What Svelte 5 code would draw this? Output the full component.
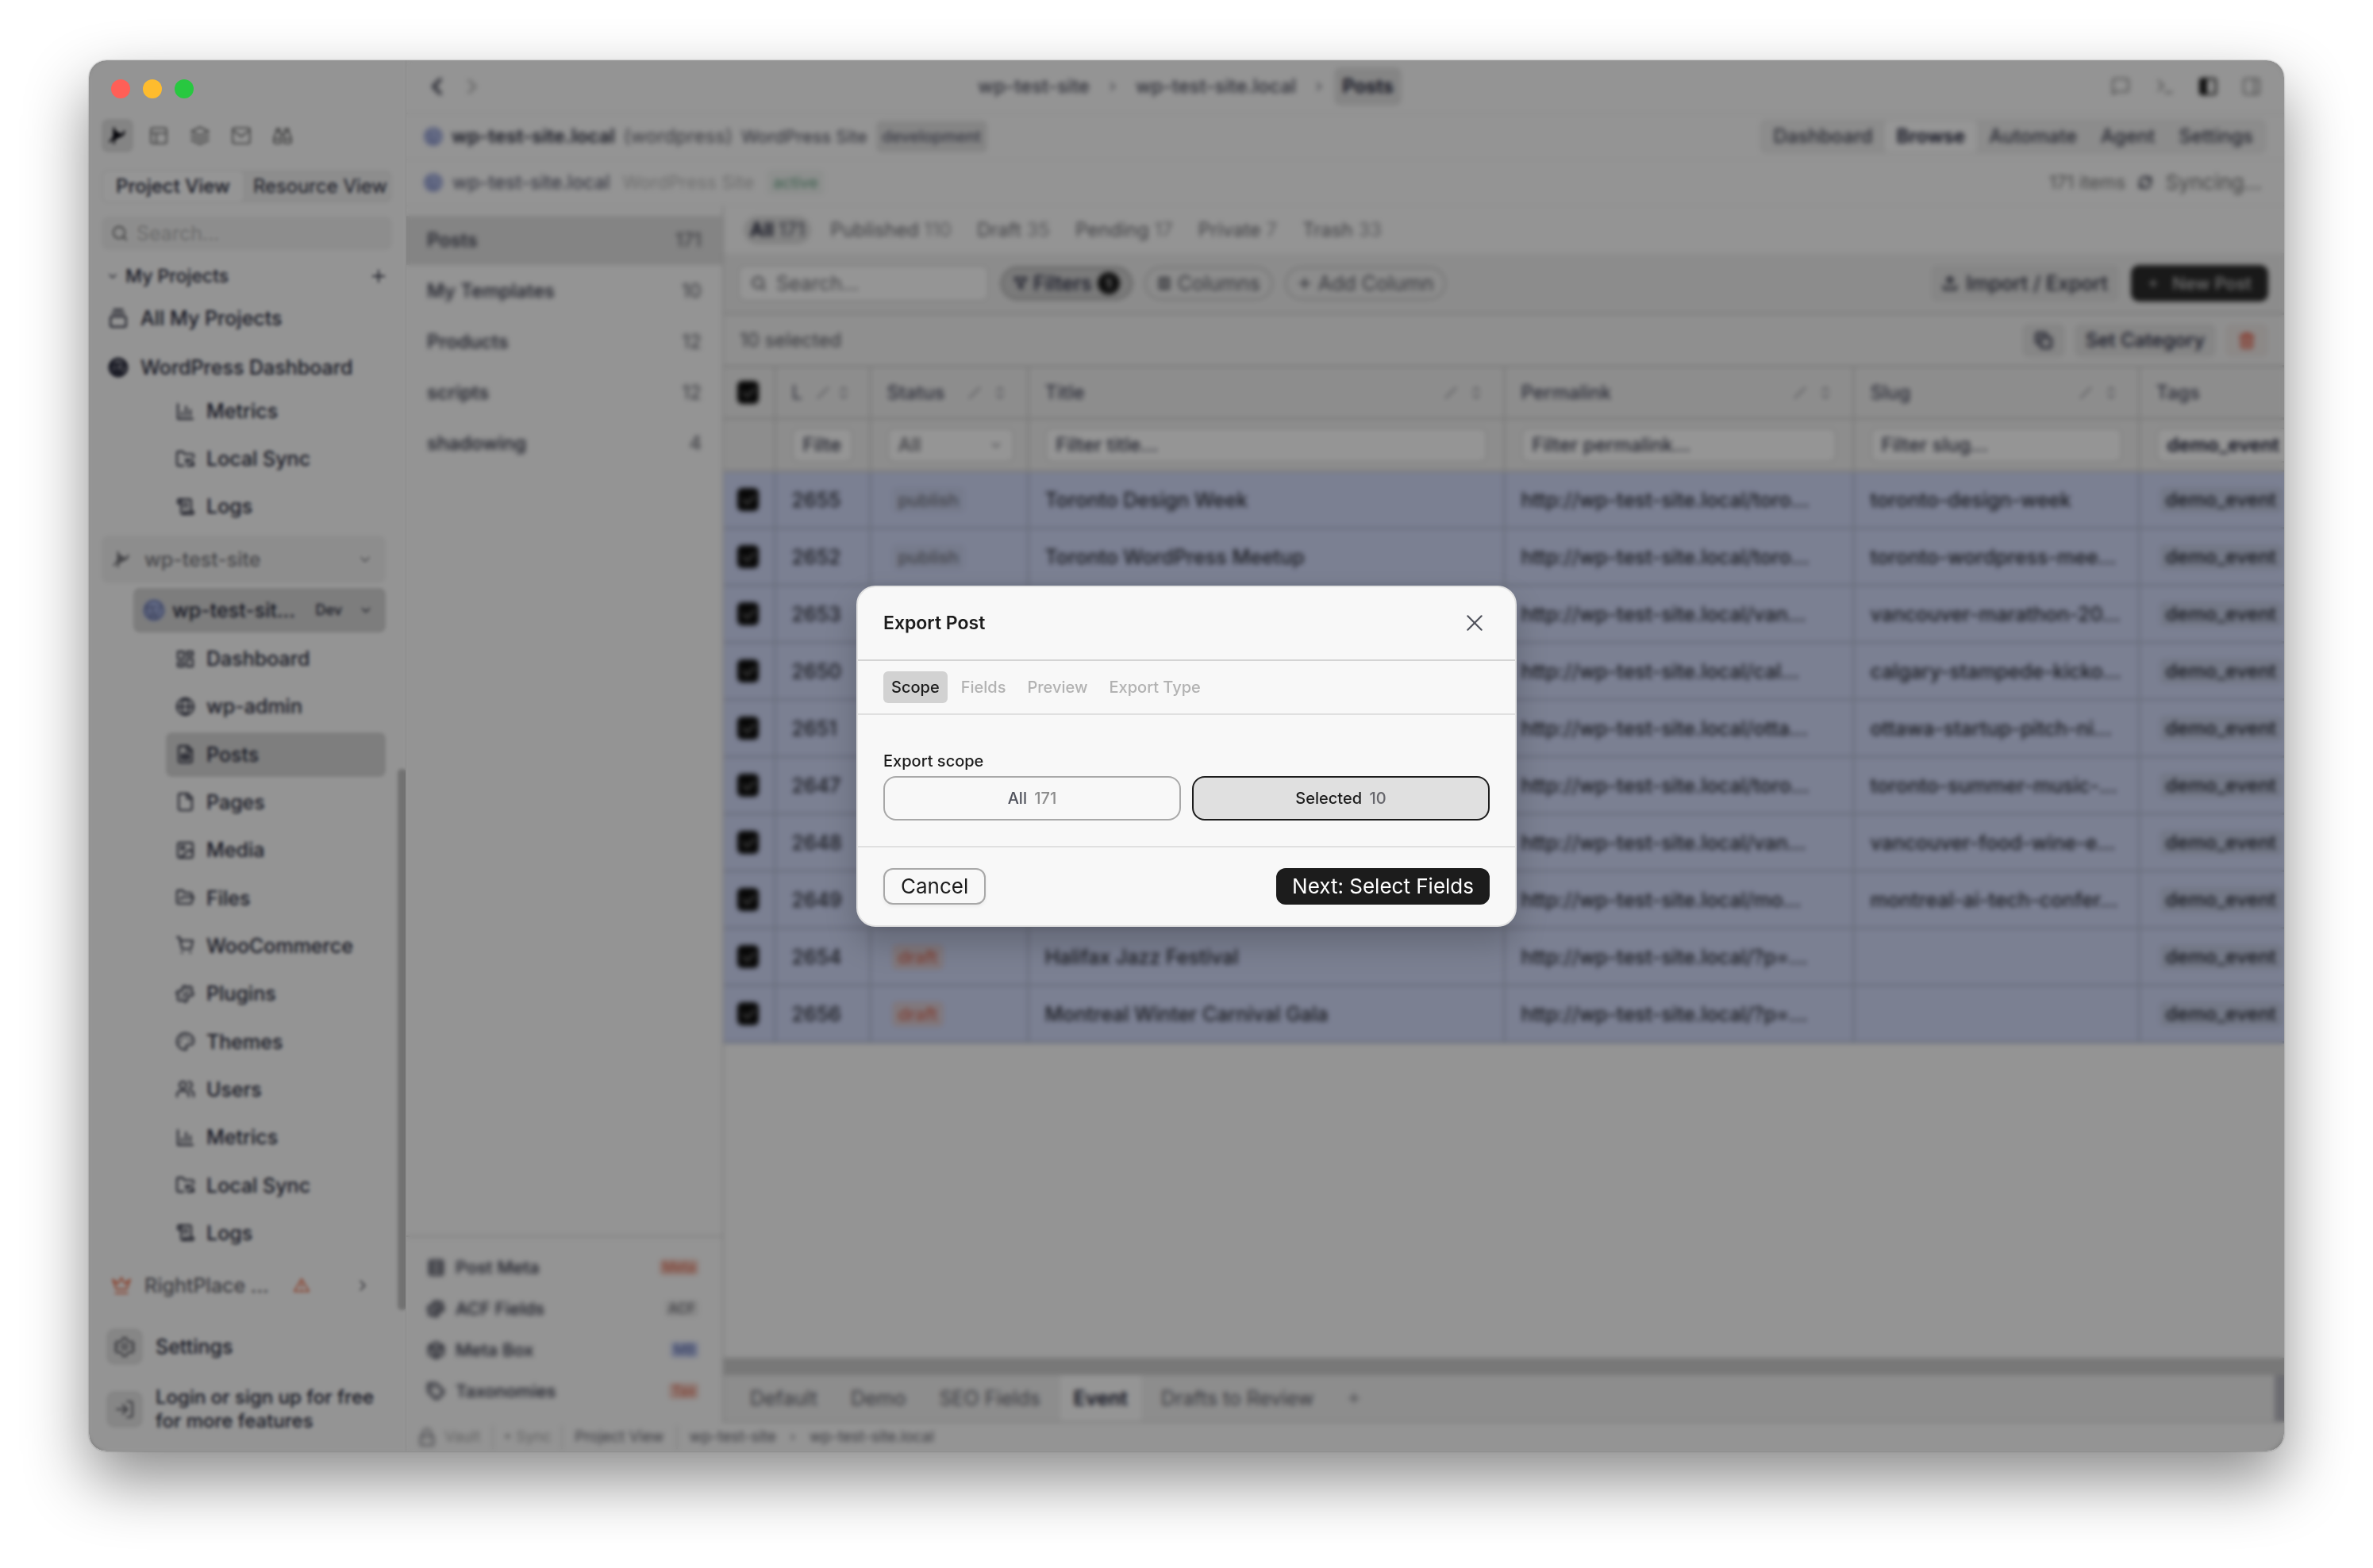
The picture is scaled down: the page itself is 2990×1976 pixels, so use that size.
<script lang="ts">
  const icons: Record<string, string[]> = {
    branch: ['M8 3v18', 'M8 17c0-4 12-3 12-10', 'M8 13L3 19', 'M8 6l8 5-8 6z'],
    layout: ['M5 3h14a2 2 0 0 1 2 2v14a2 2 0 0 1-2 2H5a2 2 0 0 1-2-2V5a2 2 0 0 1 2-2z', 'M3 9h18', 'M9 21V9'],
    layers: ['M12 2 2 7l10 5 10-5z', 'm2 12 10 5 10-5', 'm2 17 10 5 10-5'],
    mail: ['M4 3h16a2 2 0 0 1 2 2v14a2 2 0 0 1-2 2H4a2 2 0 0 1-2-2V5a2 2 0 0 1 2-2z', 'm21 6-9 7-9-7'],
    binoculars: ['M10 10h4', 'M19 7V4h-4v3', 'M5 7V4h4v3', 'M15 21h5a2 2 0 0 0 2-2v-4l-3-8h-4l-1 4v9a1 1 0 0 0 1 1z', 'M9 21H4a2 2 0 0 1-2-2v-4l3-8h4l1 4v9a1 1 0 0 1-1 1z', 'M2 16h8', 'M14 16h8'],
    search: ['M11 3a8 8 0 1 0 0 16 8 8 0 0 0 0-16z', 'm21 21-4-4'],
    down: ['m6 9 6 6 6-6'],
    right: ['m9 18 6-6-6-6'],
    left: ['m15 19-7-7 7-7'],
    plus: ['M12 4v16', 'M4 12h16'],
    stack: ['M5 10h14a2 2 0 0 1 2 2v8a2 2 0 0 1-2 2H5a2 2 0 0 1-2-2v-8a2 2 0 0 1 2-2z', 'M5 6h14', 'M7 2h10'],
    wordpress: ['M12 2a10 10 0 1 0 0 20 10 10 0 0 0 0-20z', 'm4 8 5 13 3-9', 'M9 8l5 13 5-14', 'M3 8h6', 'M10 8h5'],
    chart: ['M3 3v18h18', 'M8 17v-4', 'M13 17V6', 'M18 17v-7'],
    sync: ['M10 20H4a2 2 0 0 1-2-2V5a2 2 0 0 1 2-2h5l2 3h9a2 2 0 0 1 2 2v2', 'M13 12v3h3', 'M22 20v-3h-3', 'M21 14a5 5 0 0 0-8 1', 'M14 19a5 5 0 0 0 8-2'],
    logs: ['M19 17V5a2 2 0 0 0-2-2H4', 'M8 21h12a2 2 0 0 0 2-2v-1H11v1a2 2 0 1 1-4 0V5a2 2 0 1 0-4 0v3h4', 'M15 8h-5', 'M15 12h-5'],
    grid: ['M3 3h7v9H3z', 'M14 3h7v5h-7z', 'M14 12h7v9h-7z', 'M3 16h7v5H3z'],
    globe: ['M12 2a10 10 0 1 0 0 20 10 10 0 0 0 0-20z', 'M12 2a14 14 0 0 0 0 20 14 14 0 0 0 0-20', 'M2 12h20'],
    post: ['M15 2H6a2 2 0 0 0-2 2v16a2 2 0 0 0 2 2h12a2 2 0 0 0 2-2V7z', 'M14 2v6h6', 'M8 12h8v6H8z', 'M8 15h8'],
    page: ['M15 2H6a2 2 0 0 0-2 2v16a2 2 0 0 0 2 2h12a2 2 0 0 0 2-2V7z', 'M14 2v6h6'],
    image: ['M5 3h14a2 2 0 0 1 2 2v14a2 2 0 0 1-2 2H5a2 2 0 0 1-2-2V5a2 2 0 0 1 2-2z', 'M9 7a2 2 0 1 0 0 4 2 2 0 0 0 0-4z', 'm21 15-4-4L6 21'],
    folder: ['m6 14 2-3h14l-3 8H4a2 2 0 0 1-2-2V5a2 2 0 0 1 2-2h5l2 3h7a2 2 0 0 1 2 2v3'],
    cart: ['M2 2h3l3 14h11l2-10H6', 'M8 20v1', 'M18 20v1'],
    plug: ['M15 4a3 3 0 0 1 5 3l-1 2 3 3-3 3-2-1a3 3 0 0 0-3 3l1 2-3 3-3-3-2 1a3 3 0 0 1-4-4l1-2-3-3 3-3 2 1a3 3 0 0 0 3-3L8 5l3-3 3 3z', 'M9 15l6-6'],
    palette: ['M12 2a10 10 0 1 0 0 20c2 0 2-2 1-3s0-3 2-3h3c3 0 4-2 4-5 0-5-5-9-10-9z', 'M13 6v1', 'M17 10v1', 'M8 7v1', 'M6 12v1'],
    users: ['M2 21v-2a5 5 0 0 1 5-5h4a5 5 0 0 1 5 5v2', 'M9 3a4 4 0 1 0 0 8 4 4 0 0 0 0-8z', 'M22 21v-2a4 4 0 0 0-4-5', 'M16 3a4 4 0 0 1 0 8'],
    crown: ['m2 5 4 11h12l4-11-6 5-4-7-4 7z', 'M5 21h14'],
    warn: ['M12 3 2 20h20z', 'M12 9v5', 'M12 17v1'],
    gear: ['M12 9a3 3 0 1 0 0 6 3 3 0 0 0 0-6z', 'M10 2h4l1 3 3 2 3-1 2 4-3 2 3 3-2 4-3-1-3 2-1 3h-4l-1-3-3-2-3 1-2-4 3-3-3-2 2-4 3 1 3-2z'],
    login: ['M15 3h4a2 2 0 0 1 2 2v14a2 2 0 0 1-2 2h-4', 'm10 17 5-5-5-5', 'M15 12H3'],
    chat: ['M3 21V5a2 2 0 0 1 2-2h14a2 2 0 0 1 2 2v11a2 2 0 0 1-2 2H6z'],
    terminal: ['m5 17 6-6-6-6', 'M13 19h8'],
    panelLeft: ['M5 3h14a2 2 0 0 1 2 2v14a2 2 0 0 1-2 2H5a2 2 0 0 1-2-2V5a2 2 0 0 1 2-2z', 'M10 3v18', 'M5 4v16', 'M7 4v16', 'M9 4v16'],
    panelRight: ['M5 3h14a2 2 0 0 1 2 2v14a2 2 0 0 1-2 2H5a2 2 0 0 1-2-2V5a2 2 0 0 1 2-2z', 'M15 3v18'],
    refresh: ['M3 12a9 9 0 0 1 15-7l3 3', 'M21 3v5h-5', 'M21 12a9 9 0 0 1-15 7l-3-3', 'M3 21v-5h5'],
    filter: ['M2 3h20l-8 10v8l-4-3v-5z'],
    columns: ['M4 3h16v18H4z', 'M9 3v18', 'M15 3v18'],
    upload: ['M3 16v5h18v-5', 'M12 15V3', 'm7 8 5-5 5 5'],
    copy: ['M10 8h10a2 2 0 0 1 2 2v10a2 2 0 0 1-2 2H10a2 2 0 0 1-2-2V10a2 2 0 0 1 2-2z', 'M4 16a2 2 0 0 1-2-2V4a2 2 0 0 1 2-2h10a2 2 0 0 1 2 2'],
    trash: ['M3 6h18', 'M19 6v14a2 2 0 0 1-2 2H7a2 2 0 0 1-2-2V6', 'M8 6V3h8v3', 'M10 11v6', 'M14 11v6'],
    pencil: ['M4 20 20 4'],
    sort: ['m7 15 5 5 5-5', 'm7 9 5-5 5 5'],
    meta: ['M4 3h16v18H4z', 'M4 9h16', 'M4 15h16'],
    box: ['m12 2 9 5v10l-9 5-9-5V7z', 'm3 7 9 5 9-5', 'M12 12v10'],
    tag: ['M12 2H2v10l9 9a2 2 0 0 0 3 0l7-7a2 2 0 0 0 0-3z', 'M7 7v1'],
    lock: ['M4 11h16v11H4z', 'M7 11V7a5 5 0 0 1 10 0v4'],
    close: ['M4 4l16 16', 'M20 4 4 20'],
  }

  const railIcons = ['layout', 'layers', 'mail', 'binoculars']

  const dashboardLinks = [
    { icon: 'chart', label: 'Metrics' },
    { icon: 'sync', label: 'Local Sync' },
    { icon: 'logs', label: 'Logs' },
  ]

  const siteLinks = [
    { icon: 'grid', label: 'Dashboard' },
    { icon: 'globe', label: 'wp-admin' },
    { icon: 'post', label: 'Posts' },
    { icon: 'page', label: 'Pages' },
    { icon: 'image', label: 'Media' },
    { icon: 'folder', label: 'Files' },
    { icon: 'cart', label: 'WooCommerce' },
    { icon: 'plug', label: 'Plugins' },
    { icon: 'palette', label: 'Themes' },
    { icon: 'users', label: 'Users' },
    ...dashboardLinks,
  ]

  const postTypes = [
    { label: 'Posts', count: 171 },
    { label: 'My Templates', count: 10 },
    { label: 'Products', count: 12 },
    { label: 'scripts', count: 12 },
    { label: 'shadowing', count: 4 },
  ]

  const fieldGroups = [
    { icon: 'meta', label: 'Post Meta', badge: 'Meta', tone: 'red' },
    { icon: 'plug', label: 'ACF Fields', badge: 'ACF', tone: 'grey' },
    { icon: 'box', label: 'Meta Box', badge: 'MB', tone: 'blue' },
    { icon: 'tag', label: 'Taxonomies', badge: 'Tax', tone: 'red' },
  ]

  const sections = ['Dashboard', 'Browse', 'Automate', 'Agent', 'Settings']

  const statuses = [
    { label: 'All', count: 171 },
    { label: 'Published', count: 110 },
    { label: 'Draft', count: 35 },
    { label: 'Pending', count: 17 },
    { label: 'Private', count: 7 },
    { label: 'Trash', count: 33 },
  ]

  const columns = [
    { key: 'id', label: 'L', filter: 'Filter' },
    { key: 'status', label: 'Status', filter: '' },
    { key: 'title', label: 'Title', filter: 'Filter title...' },
    { key: 'permalink', label: 'Permalink', filter: 'Filter permalink...' },
    { key: 'slug', label: 'Slug', filter: 'Filter slug...' },
  ]

  const rows = [
    { id: 2655, status: 'publish', title: 'Toronto Design Week', path: 'toro...', slug: 'toronto-design-week' },
    { id: 2652, status: 'publish', title: 'Toronto WordPress Meetup', path: 'toro...', slug: 'toronto-wordpress-mee...' },
    { id: 2653, path: 'van...', slug: 'vancouver-marathon-20...' },
    { id: 2650, path: 'cal...', slug: 'calgary-stampede-kicko...' },
    { id: 2651, path: 'otta...', slug: 'ottawa-startup-pitch-ni...' },
    { id: 2647, path: 'toro...', slug: 'toronto-summer-music-...' },
    { id: 2648, path: 'van...', slug: 'vancouver-food-wine-e...' },
    { id: 2649, path: 'mo...', slug: 'montreal-ai-tech-confer...' },
    { id: 2654, status: 'draft', title: 'Halifax Jazz Festival', path: '?p=...', slug: '' },
    { id: 2656, status: 'draft', title: 'Montreal Winter Carnival Gala', path: '?p=...', slug: '' },
  ]

  const views = ['Default', 'Demo', 'SEO Fields', 'Event', 'Drafts to Review']
  const steps = ['Scope', 'Fields', 'Preview', 'Export Type']

  let scope = $state('selected')
</script>

{#snippet icon(name: string)}
  <svg class="icon" viewBox="0 0 24 24" aria-hidden="true">
    {#each icons[name] as d}
      <path {d} />
    {/each}
  </svg>
{/snippet}

<div class="desktop">
  <div class="window">
    <div class="lights" aria-hidden="true">
      <span class="light red"></span>
      <span class="light yellow"></span>
      <span class="light green"></span>
    </div>

    <aside class="sidebar">
      <div class="rail">
        <button class="current" aria-label="Projects">{@render icon('branch')}</button>
        {#each railIcons as name}
          <button aria-label={name}>{@render icon(name)}</button>
        {/each}
      </div>

      <div class="segmented">
        <button class="on">Project View</button>
        <button>Resource View</button>
      </div>

      <label class="side-search">
        {@render icon('search')}
        <input type="search" placeholder="Search..." aria-label="Search projects" />
      </label>

      <div class="group-title">
        {@render icon('down')}
        <span>My Projects</span>
        <button aria-label="Add project">{@render icon('plus')}</button>
      </div>

      <a class="root-link" href="#all">{@render icon('stack')} All My Projects</a>
      <a class="root-link second" href="#wordpress">{@render icon('wordpress')} WordPress Dashboard</a>

      <nav class="tree short">
        {#each dashboardLinks as link}
          <a href="#{link.label}">{@render icon(link.icon)} {link.label}</a>
        {/each}
      </nav>

      <button class="site">
        {@render icon('branch')}
        <span>wp-test-site</span>
        {@render icon('down')}
      </button>
      <button class="env">
        {@render icon('wordpress')}
        <span class="env-name">wp-test-sit...</span>
        <small>Dev</small>
        {@render icon('down')}
      </button>

      <nav class="tree long">
        {#each siteLinks as link}
          <a href="#{link.label}" class:active={link.label === 'Posts'}>{@render icon(link.icon)} {link.label}</a>
        {/each}
      </nav>

      <button class="pro">
        {@render icon('crown')}
        <span>RightPlace ...</span>
        {@render icon('warn')}
        {@render icon('right')}
      </button>

      <a class="foot" href="#settings"><span class="tile">{@render icon('gear')}</span>Settings</a>
      <a class="foot login" href="#login">
        <span class="tile">{@render icon('login')}</span>
        <span>Login or sign up for free for more features</span>
      </a>

      <div class="scroll-thumb"></div>
      <div class="scrim light-blur"></div>
    </aside>

    <main class="main">
      <header class="titlebar">
        <div class="history">
          <button aria-label="Back">{@render icon('left')}</button>
          <button aria-label="Forward" disabled>{@render icon('right')}</button>
        </div>
        <nav class="crumbs">
          <a href="#site">wp-test-site</a>
          {@render icon('right')}
          <a href="#local">wp-test-site.local</a>
          {@render icon('right')}
          <a class="here" href="#posts">Posts</a>
        </nav>
        <div class="window-tools">
          <button aria-label="Chat">{@render icon('chat')}</button>
          <button aria-label="Terminal">{@render icon('terminal')}</button>
          <button class="on" aria-label="Left panel">{@render icon('panelLeft')}</button>
          <button aria-label="Right panel">{@render icon('panelRight')}</button>
        </div>
      </header>

      <div class="site-bar">
        <span class="dot">{@render icon('wordpress')}</span>
        <strong>wp-test-site.local</strong>
        <span class="muted">(wordpress)</span>
        <span class="kind">WordPress Site</span>
        <span class="chip">development</span>
        <nav class="sections">
          {#each sections as section}
            <button class:on={section === 'Browse'}>{section}</button>
          {/each}
        </nav>
      </div>

      <div class="sync-bar">
        <span class="dot">{@render icon('wordpress')}</span>
        <span class="name">wp-test-site.local</span>
        <span class="faint">WordPress Site</span>
        <span class="active-chip">active</span>
        <span class="items">171 items</span>
        {@render icon('refresh')}
        <span class="syncing">Syncing...</span>
      </div>

      <div class="body">
        <div class="types">
          <nav>
            {#each postTypes as type}
              <button class:on={type.label === 'Posts'}>{type.label}<span>{type.count}</span></button>
            {/each}
          </nav>
          <div class="groups">
            {#each fieldGroups as group}
              <button>{@render icon(group.icon)}{group.label}<small class={group.tone}>{group.badge}</small></button>
            {/each}
          </div>
        </div>

        <section class="browser">
          <div class="statuses">
            {#each statuses as status}
              <button class:on={status.label === 'All'}>{status.label} <span>{status.count}</span></button>
            {/each}
          </div>

          <div class="toolbar">
            <label class="table-search">
              {@render icon('search')}
              <input type="search" placeholder="Search..." aria-label="Search posts" />
            </label>
            <button class="pill on">{@render icon('filter')} Filters <b>1</b></button>
            <button class="pill">{@render icon('columns')} Columns</button>
            <button class="pill">{@render icon('plus')} Add Column</button>
            <button class="soft push">{@render icon('upload')} Import / Export</button>
            <button class="dark">{@render icon('plus')} New Post</button>
          </div>

          <div class="selection">
            <span>10 selected</span>
            <button class="soft square push" aria-label="Duplicate">{@render icon('copy')}</button>
            <button class="soft">Set Category</button>
            <button class="danger square" aria-label="Delete">{@render icon('trash')}</button>
          </div>

          <div class="table-wrap">
            <table>
              <colgroup>
                <col class="c-check" />
                {#each columns as column}
                  <col class="c-{column.key}" />
                {/each}
                <col class="c-tags" />
              </colgroup>
              <thead>
                <tr>
                  <th class="check"><input type="checkbox" checked aria-label="Select all" /></th>
                  {#each columns as column}
                    <th>
                      <div class="head">
                        <span>{column.label}</span>
                        {@render icon('pencil')}
                        {@render icon('sort')}
                      </div>
                    </th>
                  {/each}
                  <th>Tags</th>
                </tr>
                <tr class="filters">
                  <td></td>
                  {#each columns as column}
                    <td>
                      {#if column.key === 'status'}
                        <div class="select">
                          <select aria-label="Filter status"><option>All</option></select>
                          {@render icon('down')}
                        </div>
                      {:else}
                        <input type="text" placeholder={column.filter} aria-label="Filter {column.key}" />
                      {/if}
                    </td>
                  {/each}
                  <td><input class="filled" type="text" value="demo_event" aria-label="Filter tags" /></td>
                </tr>
              </thead>
              <tbody>
                {#each rows as row}
                  <tr>
                    <td class="check"><input type="checkbox" checked aria-label="Select {row.id}" /></td>
                    <td>{row.id}</td>
                    <td>
                      {#if row.status}
                        <span class="status {row.status}">{row.status}</span>
                      {/if}
                    </td>
                    <td>{row.title ?? ''}</td>
                    <td>http://wp-test-site.local/{row.path}</td>
                    <td>{row.slug}</td>
                    <td><span class="term">demo_event</span></td>
                  </tr>
                {/each}
              </tbody>
            </table>
          </div>

          <div class="h-scroll"></div>
          <div class="views">
            {#each views as view}
              <button class:on={view === 'Event'}>{view}</button>
            {/each}
            <button aria-label="Add view">{@render icon('plus')}</button>
            <span class="grip"></span>
          </div>
        </section>
      </div>

      <footer class="statusbar">
        <span class="vault">{@render icon('lock')} Vault</span>
        <span class="sync">• Sync</span>
        <span class="view">Project View</span>
        <span class="trail">wp-test-site {@render icon('right')} wp-test-site.local</span>
      </footer>

      <div class="scrim heavy-blur"></div>
    </main>

    <div class="overlay">
      <div class="dialog" role="dialog" aria-modal="true" aria-labelledby="export-title">
        <header>
          <h2 id="export-title">Export Post</h2>
          <button class="close" aria-label="Close">{@render icon('close')}</button>
        </header>
        <div class="steps">
          {#each steps as step, i}
            <button class:on={i === 0} disabled={i > 0}>{step}</button>
          {/each}
        </div>
        <div class="scope">
          <p id="scope-label">Export scope</p>
          <div class="choices" role="group" aria-labelledby="scope-label">
            <button class:on={scope === 'all'} onclick={() => (scope = 'all')}>All <span>171</span></button>
            <button class:on={scope === 'selected'} onclick={() => (scope = 'selected')}>Selected <span>10</span></button>
          </div>
        </div>
        <footer>
          <button class="cancel">Cancel</button>
          <button class="next">Next: Select Fields</button>
        </footer>
      </div>
    </div>
  </div>
</div>

<style>
  :global(body) {
    background: #fff;
  }

  * {
    box-sizing: border-box;
  }

  .desktop {
    display: flex;
    min-height: 100vh;
    padding: 76px 112px 147px;
    color: #27293a;
    font-family: Inter, 'Liberation Sans', sans-serif;
    font-size: 24px;
    line-height: 32px;
  }

  .window {
    position: relative;
    display: grid;
    flex: 1;
    grid-template-columns: 400px minmax(0, 1fr);
    overflow: hidden;
    border-radius: 22px;
    background: #949494;
    box-shadow:
      0 0 2px rgba(0, 0, 0, 0.4),
      0 36px 80px rgba(0, 0, 0, 0.46);
  }

  button,
  input,
  select {
    margin: 0;
    padding: 0;
    border: 0;
    background: none;
    color: inherit;
    font: inherit;
  }

  input,
  select {
    min-width: 0;
    appearance: none;
    outline: 0;
  }

  a {
    color: inherit;
    text-decoration: none;
  }

  .icon {
    display: block;
    flex: none;
    width: 26px;
    height: 26px;
    fill: none;
    stroke: currentColor;
    stroke-linecap: round;
    stroke-linejoin: round;
    stroke-width: 2;
  }

  .scrim {
    position: absolute;
    inset: 0;
    background: rgba(0, 0, 0, 0.4);
  }

  .light-blur {
    backdrop-filter: blur(2px);
  }

  .heavy-blur {
    backdrop-filter: blur(3px);
  }

  .lights {
    position: absolute;
    z-index: 2;
    top: 24px;
    left: 28px;
    display: flex;
    gap: 16px;
  }

  .light {
    width: 24px;
    height: 24px;
    border-radius: 50%;
  }

  .light.red {
    background: #ff5f57;
  }

  .light.yellow {
    background: #febc2e;
  }

  .light.green {
    background: #28c840;
  }

  /* Sidebar */

  .sidebar {
    position: relative;
    display: flex;
    flex-direction: column;
    padding: 74px 18px 23px 16px;
    background: #f7f7f7;
    font-size: 25px;
    font-weight: 500;
  }

  .rail {
    display: flex;
    gap: 12px;
    color: #7c7c7c;
  }

  .rail button {
    display: grid;
    place-items: center;
    width: 40px;
    height: 42px;
    border-radius: 8px;
  }

  .rail .current {
    background: #dcdcdc;
    color: #0c0c14;
  }

  .rail .current .icon {
    fill: currentColor;
  }

  .segmented {
    display: flex;
    justify-content: space-between;
    margin-top: 22px;
    border: 2px solid #ececec;
    border-radius: 8px;
    background: #ebebeb;
    font-size: 24px;
    font-weight: 400;
    line-height: 38px;
    white-space: nowrap;
  }

  .segmented button {
    padding: 0 4px;
  }

  .segmented .on {
    padding: 0 16px;
    border-radius: 6px;
    background: #f9f9f9;
    font-weight: 500;
  }

  .side-search {
    display: flex;
    align-items: center;
    gap: 10px;
    height: 42px;
    margin-top: 17px;
    padding: 0 12px;
    border-radius: 8px;
    background: #ececec;
    color: #8f8f8f;
    font-weight: 400;
  }

  .side-search .icon {
    width: 22px;
    height: 22px;
    stroke: #666;
  }

  .side-search input::placeholder {
    color: #b4b4b4;
  }

  .group-title {
    display: flex;
    align-items: center;
    gap: 8px;
    margin-top: 17px;
    padding: 0 6px;
    font-size: 23px;
  }

  .group-title > .icon {
    width: 16px;
    height: 16px;
  }

  .group-title button {
    margin-left: auto;
  }

  .group-title button .icon {
    width: 22px;
    height: 22px;
  }

  .root-link {
    display: flex;
    align-items: center;
    gap: 15px;
    margin-top: 21px;
    padding-left: 8px;
    white-space: nowrap;
  }

  .root-link.second {
    margin-top: 30px;
  }

  .root-link.second .icon {
    fill: #9a9aa4;
    stroke-width: 3;
  }

  .tree {
    display: flex;
    flex-direction: column;
    justify-content: space-between;
    padding-left: 81px;
  }

  .tree.short {
    gap: 4px;
    margin-top: 11px;
  }

  .tree.long {
    flex: 1;
    margin-top: 5px;
  }

  .tree a {
    display: flex;
    align-items: center;
    gap: 14px;
    height: 56px;
    margin-right: 8px;
    padding-left: 12px;
    border-radius: 8px;
  }

  .tree a .icon {
    width: 25px;
    height: 25px;
  }

  .tree a.active {
    background: #d2d2d2;
  }

  .site {
    display: flex;
    align-items: center;
    gap: 16px;
    height: 60px;
    margin: 9px 8px 0 0;
    padding: 0 16px 0 12px;
    border-radius: 8px;
    background: #ececec;
    color: #77777c;
  }

  .site .icon:first-child {
    fill: currentColor;
  }

  .site .icon:last-child {
    width: 20px;
    height: 20px;
    margin-left: auto;
  }

  .env {
    display: flex;
    align-items: center;
    gap: 9px;
    height: 56px;
    margin: 6px 8px 0 40px;
    padding: 0 16px 0 12px;
    border-radius: 8px;
    background: #d0d0d0;
  }

  .env .icon:first-child {
    width: 28px;
    height: 28px;
    border-radius: 50%;
    background: #a9b6e6;
    stroke: #737da6;
  }

  .env .icon:last-child {
    width: 18px;
    height: 18px;
  }

  .env small {
    margin: 0 12px 0 auto;
    font-size: 18px;
  }

  .pro {
    display: flex;
    align-items: center;
    gap: 16px;
    height: 60px;
    margin: 8px 8px 0 0;
    padding: 0 18px 0 12px;
    color: #66666e;
  }

  .pro .icon:first-child {
    stroke: #e8704f;
  }

  .pro .icon:nth-child(3) {
    width: 22px;
    height: 22px;
    margin-left: 14px;
    stroke: #e8704f;
  }

  .pro .icon:last-child {
    width: 22px;
    height: 22px;
    margin-left: auto;
  }

  .foot {
    display: flex;
    align-items: center;
    gap: 16px;
    margin-top: 24px;
    padding-left: 6px;
    line-height: 30px;
  }

  .foot.login {
    margin-top: 26px;
    font-size: 24px;
  }

  .tile {
    display: grid;
    flex: none;
    place-items: center;
    width: 46px;
    height: 46px;
    border-radius: 10px;
    background: #dfdfdf;
    color: #5a5a62;
  }

  .scroll-thumb {
    position: absolute;
    right: 0;
    bottom: 178px;
    width: 11px;
    height: 682px;
    border-radius: 5px;
    background: #bdbdbd;
  }

  /* Main area */

  .main {
    position: relative;
    display: flex;
    flex-direction: column;
    background: #f7f7f7;
    box-shadow: -1px 0 #8e8e8e;
  }

  .titlebar {
    display: grid;
    grid-template-columns: 1fr auto 1fr;
    align-items: center;
    height: 68px;
    padding: 0 28px 0 24px;
    border-bottom: 2px solid #ececec;
  }

  .history {
    display: flex;
    gap: 14px;
  }

  .history button:disabled {
    color: #b6b6b6;
  }

  .history .icon {
    width: 30px;
    height: 30px;
    stroke-width: 3;
  }

  .crumbs {
    display: flex;
    align-items: center;
    gap: 20px;
    margin-right: 388px;
    color: #4a4b5a;
    font-weight: 500;
  }

  .crumbs .icon {
    width: 18px;
    height: 18px;
  }

  .crumbs .here {
    margin-left: -10px;
    padding: 8px 10px;
    border-radius: 8px;
    background: #dedede;
    color: #10122a;
    font-weight: 600;
  }

  .window-tools {
    display: flex;
    justify-content: flex-end;
    gap: 29px;
    color: #848484;
  }

  .window-tools .on {
    color: #000;
  }

  .site-bar,
  .sync-bar {
    display: flex;
    align-items: center;
    gap: 11px;
    height: 58px;
    padding: 0 22px;
    border-bottom: 2px solid #f0f0f0;
  }

  .dot {
    border-radius: 50%;
    background: #bcc6ee;
    color: #8590c2;
  }

  .dot .icon {
    width: 24px;
    height: 24px;
  }

  .site-bar strong {
    font-size: 24px;
    font-weight: 600;
  }

  .muted {
    color: #5e5e68;
  }

  .kind {
    color: #4a4b5a;
    font-size: 22px;
  }

  .chip {
    padding: 4px 8px;
    border-radius: 6px;
    background: #dedede;
    color: #55576a;
    font-size: 20px;
    font-weight: 500;
  }

  .sections {
    display: flex;
    margin-left: auto;
    border: 2px solid #e9e9e9;
    border-radius: 8px;
    background: #e9e9e9;
    line-height: 40px;
  }

  .sections button {
    padding: 0 15px;
    color: #3c3e4e;
    font-weight: 500;
  }

  .sections .on {
    border-radius: 6px;
    background: #fafafa;
    color: #10122a;
    font-weight: 600;
  }

  .sync-bar {
    gap: 16px;
  }

  .sync-bar .name {
    margin-left: -4px;
    color: #44465a;
    font-size: 24px;
  }

  .faint {
    color: #b4b4b4;
    font-size: 23px;
  }

  .active-chip {
    padding: 0 8px;
    border-radius: 6px;
    background: #ecefed;
    color: #5f9a7c;
    font-size: 20px;
  }

  .items {
    margin-left: auto;
    color: #707070;
    font-size: 23px;
  }

  .sync-bar > .icon {
    width: 18px;
    height: 18px;
    stroke-width: 3;
  }

  .syncing {
    margin-right: 6px;
    color: #6c6c6c;
    font-size: 26px;
  }

  .body {
    display: grid;
    flex: 1;
    grid-template-columns: 400px minmax(0, 1fr);
  }

  .types {
    display: flex;
    flex-direction: column;
    justify-content: space-between;
    border-right: 2px solid #d0d0d0;
  }

  .types nav {
    display: grid;
    gap: 2px;
    padding-top: 12px;
  }

  .types nav button {
    display: flex;
    justify-content: space-between;
    padding: 15px 26px;
    font-weight: 500;
  }

  .types nav span {
    color: #55565f;
    font-weight: 400;
  }

  .types nav .on {
    background: #dcdcdc;
  }

  .groups {
    display: grid;
    gap: 20px;
    padding: 22px 30px 24px 26px;
    border-top: 2px solid #d4d4d4;
    font-size: 22px;
  }

  .groups button {
    display: flex;
    align-items: center;
    gap: 13px;
    font-weight: 500;
  }

  .groups .icon {
    width: 23px;
    height: 23px;
    stroke-width: 3;
  }

  .groups small {
    margin-left: auto;
    padding: 0 4px;
    border-radius: 4px;
    font-size: 17px;
    line-height: 20px;
  }

  .groups .red {
    background: #f0cdc4;
    color: #d8705a;
  }

  .groups .grey {
    background: #e4e4e4;
    color: #66666e;
  }

  .groups .blue {
    background: #c6cff0;
    color: #5a68a4;
  }

  /* Post browser */

  .browser {
    display: flex;
    flex-direction: column;
    min-width: 0;
  }

  .statuses {
    display: flex;
    align-items: center;
    gap: 16px;
    height: 59px;
    padding: 0 26px 0 25px;
    color: #66666c;
  }

  .statuses button {
    padding: 2px 8px;
    border-radius: 20px;
  }

  .statuses .on {
    background: #dadada;
    color: #10122a;
    font-weight: 600;
  }

  .statuses span {
    opacity: 0.7;
    font-weight: 400;
  }

  .toolbar {
    display: flex;
    align-items: center;
    gap: 15px;
    height: 78px;
    padding: 0 20px 0 18px;
    border-bottom: 3px solid #d4d4d4;
    background: #eaeaea;
    font-size: 25px;
  }

  .table-search {
    display: flex;
    align-items: center;
    gap: 12px;
    width: 316px;
    height: 46px;
    padding: 0 14px;
    border: 2px solid #d6d6d6;
    border-radius: 8px;
    background: #f9f9f9;
    color: #6a6a70;
  }

  .table-search .icon {
    width: 22px;
    height: 22px;
  }

  .table-search input::placeholder {
    color: #6a6a70;
  }

  .pill {
    display: flex;
    align-items: center;
    gap: 8px;
    height: 42px;
    padding: 0 14px;
    border: 2px solid #bcbcbc;
    border-radius: 21px;
    color: #55565f;
  }

  .pill.on {
    gap: 7px;
    border-color: #989898;
    background: #cdcdcd;
    color: #20223a;
    font-weight: 500;
  }

  .pill b {
    width: 28px;
    border-radius: 14px;
    background: #1a1a1a;
    color: #ccc;
    font-size: 16px;
    line-height: 28px;
  }

  .toolbar .icon {
    width: 20px;
    height: 20px;
    stroke-width: 3;
  }

  .toolbar .pill .icon {
    width: 18px;
    height: 18px;
  }

  .soft,
  .dark,
  .danger {
    display: flex;
    align-items: center;
    gap: 10px;
    height: 46px;
    padding: 0 14px;
    border-radius: 8px;
    background: #dfdfdf;
    font-weight: 500;
  }

  .push {
    margin-left: auto;
  }

  .dark {
    gap: 17px;
    padding: 0 21px;
    border-radius: 10px;
    background: #2a2a2a;
    color: #c4c4c4;
    font-size: 22px;
  }

  .toolbar .dark .icon {
    width: 14px;
    height: 14px;
  }

  .selection {
    display: flex;
    align-items: center;
    gap: 12px;
    height: 63px;
    padding: 0 20px;
    background: #efefef;
    color: #55565f;
  }

  .selection .soft {
    height: 42px;
    color: #20223a;
  }

  .selection .icon {
    width: 22px;
    height: 22px;
    stroke-width: 3;
  }

  .square {
    justify-content: center;
    width: 54px;
    height: 42px;
  }

  .danger {
    background: #e9e4e2;
    color: #e2604a;
  }

  .table-wrap {
    flex: 1;
    overflow: hidden;
  }

  table {
    width: 2100px;
    border-collapse: collapse;
    table-layout: fixed;
    font-size: 25px;
  }

  .c-check {
    width: 64px;
  }

  .c-id {
    width: 120px;
  }

  .c-status {
    width: 199px;
  }

  .c-title {
    width: 600px;
  }

  .c-permalink {
    width: 440px;
  }

  .c-slug {
    width: 360px;
  }

  th,
  td {
    overflow: hidden;
    height: 72px;
    padding: 0 20px;
    border: 3px solid #b2bad2;
    border-left: 0;
    color: #262830;
    font-weight: 500;
    text-align: left;
    white-space: nowrap;
  }

  thead th,
  thead td {
    height: 66px;
    border-color: #d0d0d0;
    background: #ececec;
    color: #44465a;
    font-size: 24px;
  }

  tbody tr {
    background: #cdd5f4;
  }

  .check {
    padding: 0 0 0 17px;
  }

  .check input {
    display: block;
    width: 27px;
    height: 29px;
    border-radius: 6px;
    background: #0e0e0e;
  }

  .check input::after {
    display: block;
    width: 13px;
    height: 7px;
    margin: 8px 7px;
    border: solid #8a8a8a;
    border-width: 0 0 2px 2px;
    content: '';
    rotate: -45deg;
  }

  .head {
    display: flex;
    align-items: center;
    gap: 12px;
    margin-right: 4px;
  }

  .head span {
    margin-right: auto;
  }

  .head .icon {
    width: 20px;
    height: 26px;
    stroke: #85858c;
  }

  th:nth-child(2) .head {
    gap: 6px;
    margin-right: 2px;
  }

  th:nth-child(2) span {
    font-weight: 400;
  }

  .filters input,
  .filters select {
    display: block;
    width: 100%;
    height: 44px;
    padding: 0 12px;
    border: 2px solid #d6d6d6;
    border-radius: 8px;
    background: #f9f9f9;
  }

  .filters input::placeholder {
    color: #3a3c4e;
  }

  .filters .filled {
    color: #10122a;
    font-weight: 600;
  }

  .select {
    position: relative;
    width: 160px;
    color: #66666e;
  }

  .select .icon {
    position: absolute;
    top: 13px;
    right: 14px;
    width: 18px;
    height: 18px;
  }

  .status,
  .term {
    display: inline-block;
    margin-left: 6px;
    padding: 2px 8px;
    border-radius: 6px;
    background: #c5cde9;
    font-size: 22px;
    line-height: 28px;
  }

  .status.publish {
    color: #6c6e78;
  }

  .status.draft {
    background: #d6c8d0;
    color: #d46c58;
  }

  .term {
    margin-left: 4px;
    background: #c0c8e0;
    color: #20222c;
    font-size: 24px;
  }

  .h-scroll {
    height: 22px;
    background: #c8c8c8;
  }

  .views {
    display: flex;
    align-items: stretch;
    gap: 8px;
    height: 60px;
    padding-left: 16px;
    border-bottom: 2px solid #d4d4d4;
    background: #ebebeb;
    color: #5c5c66;
    font-size: 25px;
  }

  .views button {
    padding: 0 17px;
  }

  .views .on {
    background: #f9f9f9;
    color: #10122a;
    font-weight: 600;
  }

  .views .icon {
    width: 18px;
    height: 18px;
  }

  .grip {
    width: 12px;
    margin-left: auto;
    background: #b4b4bc;
  }

  .statusbar {
    display: flex;
    align-items: center;
    height: 36px;
    padding-left: 14px;
    color: #5c5c66;
    font-size: 19px;
  }

  .statusbar span {
    display: flex;
    align-items: center;
    gap: 8px;
    padding: 0 15px;
    border-right: 2px solid #dadada;
    line-height: 30px;
  }

  .statusbar .vault {
    gap: 10px;
    padding-left: 0;
    color: #a0a0a0;
  }

  .statusbar .vault .icon {
    width: 24px;
    height: 24px;
    stroke: #66666e;
  }

  .statusbar .sync {
    padding: 0 12px;
    color: #a0a0a0;
  }

  .statusbar .trail {
    gap: 14px;
    border: 0;
  }

  .statusbar .trail .icon {
    width: 14px;
    height: 14px;
  }

  /* Export dialog */

  .overlay {
    position: absolute;
    z-index: 3;
    inset: 0;
    display: grid;
    place-items: center;
  }

  .dialog {
    width: 832px;
    border: 2px solid #e2e2e2;
    border-radius: 24px;
    background: #f8f8f8;
    box-shadow: 0 20px 40px rgba(0, 0, 0, 0.2);
    color: #1c1c1c;
    font-size: 20px;
  }

  .dialog header {
    display: flex;
    align-items: center;
    justify-content: space-between;
    height: 93px;
    padding: 0 38px 0 32px;
    border-bottom: 2px solid #d4d4d4;
  }

  h2 {
    margin: 0;
    font-size: 23px;
    font-weight: 600;
  }

  .close {
    color: #50525c;
  }

  .close .icon {
    width: 26px;
    height: 26px;
  }

  .steps {
    display: flex;
    gap: 7px;
    padding: 13px 32px;
    border-bottom: 2px solid #e0e0e0;
    font-weight: 500;
    line-height: 40px;
  }

  .steps button {
    padding: 0 10px;
    border-radius: 6px;
    color: #b2b2b2;
  }

  .steps .on {
    background: #d2d2d2;
    color: #1c1c1c;
  }

  .scope {
    padding: 42px 32px 32px;
  }

  .scope p {
    margin: 0 0 3px;
    font-weight: 500;
  }

  .choices {
    display: grid;
    grid-template-columns: 1fr 1fr;
    gap: 14px;
  }

  .choices button {
    height: 56px;
    border: 2px solid #a8a8a8;
    border-radius: 16px;
    color: #50525c;
    font-weight: 500;
  }

  .choices span {
    margin-left: 4px;
    color: #8c8c8c;
  }

  .choices .on {
    border-color: #1c1c1c;
    background: #e0e0e0;
    color: #1c1c1c;
  }

  .choices .on span {
    color: #66666c;
  }

  .dialog footer {
    display: flex;
    justify-content: space-between;
    padding: 26px 32px;
    border-top: 2px solid #e0e0e0;
    font-size: 26px;
    line-height: 42px;
  }

  .dialog footer button {
    padding: 0 20px;
    border: 2px solid #1c1c1c;
    border-radius: 12px;
  }

  .dialog footer .cancel {
    border-color: #a8a8a8;
    box-shadow: 0 2px 4px rgba(0, 0, 0, 0.06);
  }

  .dialog footer .next {
    padding: 0 18px;
    background: #1c1c1c;
    color: #fff;
  }
</style>
